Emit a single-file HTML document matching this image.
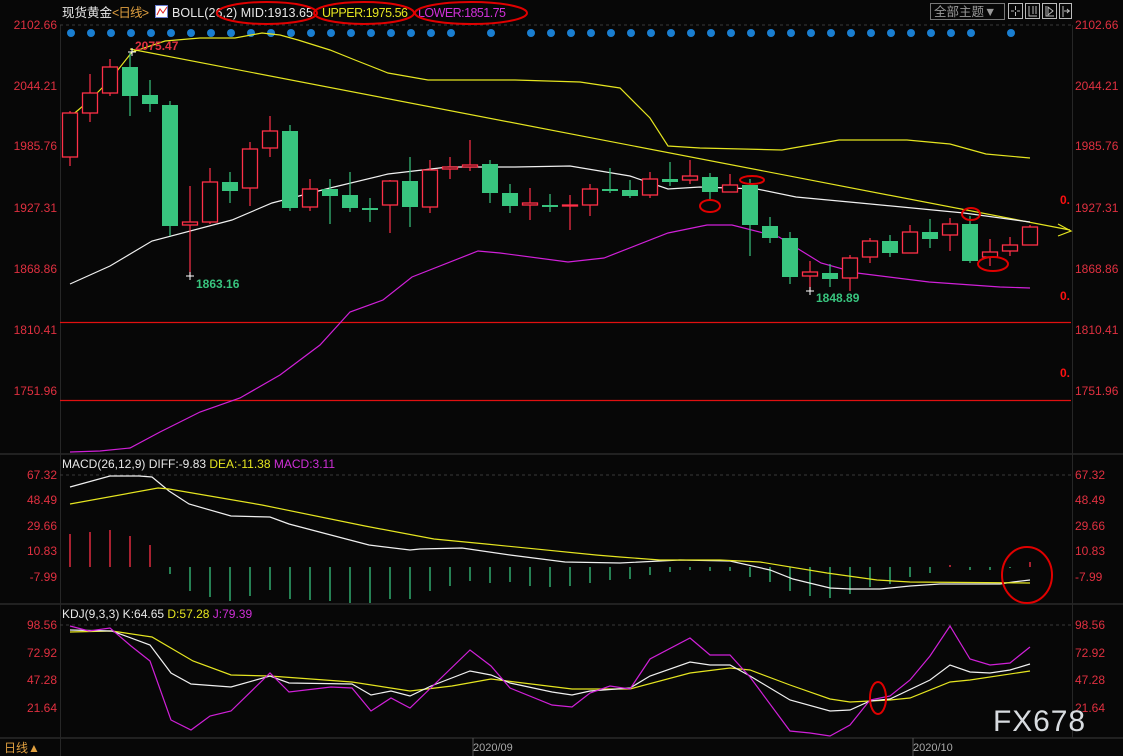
<!DOCTYPE html>
<html><head><meta charset="utf-8">
<style>
html,body{margin:0;padding:0;background:#070707;}
svg{display:block;font-family:"Liberation Sans","Noto Sans CJK SC",sans-serif;}
</style></head>
<body>
<svg width="1123" height="756" viewBox="0 0 1123 756" xmlns="http://www.w3.org/2000/svg">
<rect width="1123" height="756" fill="#070707"/>
<g stroke="#2a2a2a" stroke-width="1.5">
<line x1="0" y1="454" x2="1123" y2="454"/>
<line x1="0" y1="604" x2="1123" y2="604"/>
<line x1="0" y1="738" x2="1123" y2="738"/>
</g>
<g stroke="#262626" stroke-width="1">
<line x1="60.5" y1="25" x2="60.5" y2="756"/>
<line x1="1072.5" y1="25" x2="1072.5" y2="738"/>
</g>
<g stroke="#3a3a3a" stroke-dasharray="3,3">
<line x1="60" y1="25" x2="1072" y2="25"/>
<line x1="60" y1="475" x2="1072" y2="475"/>
<line x1="60" y1="625" x2="1072" y2="625"/>
</g>
<!-- top bar -->
<text x="62" y="17" font-size="12.5" fill="#e8e8e8" textLength="50">现货黄金</text>
<text x="112" y="17" font-size="12.5" fill="#e0a040" textLength="37">&lt;日线&gt;</text>
<rect x="155.5" y="5.5" width="12" height="12" fill="#fff" stroke="#6a7cd0"/>
<path d="M157 15 L160 9 L163 13 L167 7" stroke="#e02020" fill="none"/>
<text x="172" y="17" font-size="12.5" fill="#e8e8e8" textLength="141">BOLL(26,2) MID:1913.65</text>
<text x="322" y="17" font-size="12.5" fill="#e5e520" textLength="86">UPPER:1975.56</text>
<text x="418" y="17" font-size="12.5" fill="#d030d8" textLength="88">LOWER:1851.75</text>
<g fill="none" stroke="#e00000" stroke-width="2">
<ellipse cx="267" cy="13" rx="50" ry="11"/>
<ellipse cx="364" cy="13" rx="50" ry="11"/>
<ellipse cx="471" cy="13" rx="56" ry="11"/>
</g>
<rect x="930.5" y="3.5" width="74" height="16" fill="none" stroke="#777"/>
<text x="934" y="16" font-size="12.5" fill="#999">全部主题▼</text>
<g fill="none" stroke="#bbb">
<rect x="1008.5" y="3.5" width="14" height="15"/>
<rect x="1025.5" y="3.5" width="14" height="15"/>
<rect x="1042.5" y="3.5" width="14" height="15"/>
<rect x="1059.5" y="3.5" width="12" height="15"/>
<path d="M1015.5 6v4M1015.5 12v4M1011 11h3M1017 11h3M1029 6v10h8M1033 6v8M1036 6v8M1046 6v10h8M1048 7l5 4-5 4z M1063 6v11M1064 11h6M1067 9l2 2-2 2"/>
</g>
<g font-size="12" fill="#e03040" text-anchor="end">
<text x="57" y="29">2102.66</text>
<text x="57" y="90">2044.21</text>
<text x="57" y="150">1985.76</text>
<text x="57" y="212">1927.31</text>
<text x="57" y="273">1868.86</text>
<text x="57" y="334">1810.41</text>
<text x="57" y="395">1751.96</text>
<text x="57" y="479">67.32</text>
<text x="57" y="504">48.49</text>
<text x="57" y="530">29.66</text>
<text x="57" y="555">10.83</text>
<text x="57" y="581">-7.99</text>
<text x="57" y="629">98.56</text>
<text x="57" y="657">72.92</text>
<text x="57" y="684">47.28</text>
<text x="57" y="712">21.64</text>
</g>
<g font-size="12" fill="#e03040">
<text x="1075" y="29">2102.66</text>
<text x="1075" y="90">2044.21</text>
<text x="1075" y="150">1985.76</text>
<text x="1075" y="212">1927.31</text>
<text x="1075" y="273">1868.86</text>
<text x="1075" y="334">1810.41</text>
<text x="1075" y="395">1751.96</text>
<text x="1075" y="479">67.32</text>
<text x="1075" y="504">48.49</text>
<text x="1075" y="530">29.66</text>
<text x="1075" y="555">10.83</text>
<text x="1075" y="581">-7.99</text>
<text x="1075" y="629">98.56</text>
<text x="1075" y="657">72.92</text>
<text x="1075" y="684">47.28</text>
<text x="1075" y="712">21.64</text>
</g>
<g font-size="12" font-weight="bold" fill="#ff1010">
<text x="1060" y="204">0.</text>
<text x="1060" y="300">0.</text>
<text x="1060" y="377">0.</text>
</g>
<g fill="#1a7ed0">
<circle cx="71" cy="33" r="4"/><circle cx="91" cy="33" r="4"/><circle cx="111" cy="33" r="4"/><circle cx="131" cy="33" r="4"/><circle cx="151" cy="33" r="4"/><circle cx="171" cy="33" r="4"/><circle cx="191" cy="33" r="4"/><circle cx="211" cy="33" r="4"/><circle cx="231" cy="33" r="4"/><circle cx="251" cy="33" r="4"/><circle cx="271" cy="33" r="4"/><circle cx="291" cy="33" r="4"/><circle cx="311" cy="33" r="4"/><circle cx="331" cy="33" r="4"/><circle cx="351" cy="33" r="4"/><circle cx="371" cy="33" r="4"/><circle cx="391" cy="33" r="4"/><circle cx="411" cy="33" r="4"/><circle cx="431" cy="33" r="4"/><circle cx="451" cy="33" r="4"/><circle cx="491" cy="33" r="4"/><circle cx="531" cy="33" r="4"/><circle cx="551" cy="33" r="4"/><circle cx="571" cy="33" r="4"/><circle cx="591" cy="33" r="4"/><circle cx="611" cy="33" r="4"/><circle cx="631" cy="33" r="4"/><circle cx="651" cy="33" r="4"/><circle cx="671" cy="33" r="4"/><circle cx="691" cy="33" r="4"/><circle cx="711" cy="33" r="4"/><circle cx="731" cy="33" r="4"/><circle cx="751" cy="33" r="4"/><circle cx="771" cy="33" r="4"/><circle cx="791" cy="33" r="4"/><circle cx="811" cy="33" r="4"/><circle cx="831" cy="33" r="4"/><circle cx="851" cy="33" r="4"/><circle cx="871" cy="33" r="4"/><circle cx="891" cy="33" r="4"/><circle cx="911" cy="33" r="4"/><circle cx="931" cy="33" r="4"/><circle cx="951" cy="33" r="4"/><circle cx="971" cy="33" r="4"/><circle cx="1011" cy="33" r="4"/>
</g>
<g stroke="#e01010" stroke-width="1.3">
<line x1="60" y1="322.5" x2="1071" y2="322.5"/>
<line x1="60" y1="400.5" x2="1071" y2="400.5"/>
</g>
<g fill="none" stroke-width="1.2">
<polyline stroke="#e5e520" points="70,117 90,100 110,80 132,52 165,41 200,38 235,38 262,33 280,35 298,40 330,50 355,60 388,73 428,80 515,80 580,82 620,88 650,118 668,146 700,148 782,150 793,148 839,140 907,140 950,144 986,154 1030,158"/>
<polyline stroke="#e5e520" points="130,49 1070,230"/>
<path d="M1058 224 L1071 231 L1058 236" stroke="#e5e520"/>
<polyline stroke="#f0f0f0" points="70,284 110,266 152,241 232,220 272,203 330,188 388,174 448,167 515,167 570,166 630,176 668,189 700,187 757,189 796,197 860,203 964,213 1030,222"/>
<polyline stroke="#d020d8" points="70,452 100,451 130,448 160,432 200,412 240,398 280,375 320,345 350,312 383,300 412,277 478,251 500,253 568,262 604,258 668,233 707,225 732,225 779,237 821,263 857,273 929,282 1000,287 1030,288"/>
</g>
<path fill="none" stroke="#ff3048" stroke-width="1.2" d="M70 111V166 M90 74V122 M110 59V96 M190 186V276 M210 168V224 M250 142V206 M270 116V157 M310 179V211 M390 180V233 M430 160V213 M450 157V179 M470 140V171 M530 188V220 M570 195V230 M590 184V216 M650 172V198 M690 160V184 M730 174V192 M810 261V291 M850 255V291 M870 238V263 M910 225V253 M950 218V251 M990 239V266 M1010 237V256 M1030 225V245"/>
<path fill="none" stroke="#38c47e" stroke-width="1.2" d="M130 53V116 M150 80V112 M170 101V236 M230 172V203 M290 125V211 M330 179V224 M350 172V212 M370 198V222 M410 157V227 M490 160V203 M510 184V213 M550 194V212 M610 168V193 M630 180V198 M670 162V186 M710 173V200 M750 179V256 M770 217V243 M790 232V284 M830 264V287 M890 235V257 M930 219V248 M970 216V263"/>
<g fill="#38c47e">
<rect x="122" y="67" width="16" height="29"/><rect x="142" y="95" width="16" height="9"/><rect x="162" y="105" width="16" height="121"/><rect x="222" y="182" width="16" height="9"/><rect x="282" y="131" width="16" height="77"/><rect x="322" y="189" width="16" height="7"/><rect x="342" y="195" width="16" height="13"/><rect x="362" y="208" width="16" height="2"/><rect x="402" y="181" width="16" height="26"/><rect x="482" y="164" width="16" height="29"/><rect x="502" y="193" width="16" height="13"/><rect x="542" y="205" width="16" height="2"/><rect x="602" y="189" width="16" height="2"/><rect x="622" y="190" width="16" height="6"/><rect x="662" y="179" width="16" height="3"/><rect x="702" y="177" width="16" height="15"/><rect x="742" y="185" width="16" height="40"/><rect x="762" y="226" width="16" height="12"/><rect x="782" y="238" width="16" height="39"/><rect x="822" y="273" width="16" height="6"/><rect x="882" y="241" width="16" height="12"/><rect x="922" y="232" width="16" height="7"/><rect x="962" y="224" width="16" height="37"/>
</g>
<g fill="#070707" stroke="#ff3048" stroke-width="1.3">
<rect x="62.5" y="113" width="15" height="44"/><rect x="82.5" y="93" width="15" height="20"/><rect x="102.5" y="67" width="15" height="26"/><rect x="182.5" y="222" width="15" height="3"/><rect x="202.5" y="182" width="15" height="40"/><rect x="242.5" y="149" width="15" height="39"/><rect x="262.5" y="131" width="15" height="17"/><rect x="302.5" y="189" width="15" height="18"/><rect x="382.5" y="181" width="15" height="24"/><rect x="422.5" y="170" width="15" height="37"/><rect x="442.5" y="167" width="15" height="2"/><rect x="462.5" y="165" width="15" height="2"/><rect x="522.5" y="203" width="15" height="2"/><rect x="562.5" y="205" width="15" height="1"/><rect x="582.5" y="189" width="15" height="16"/><rect x="642.5" y="179" width="15" height="16"/><rect x="682.5" y="176" width="15" height="4"/><rect x="722.5" y="185" width="15" height="7"/><rect x="802.5" y="272" width="15" height="4"/><rect x="842.5" y="258" width="15" height="20"/><rect x="862.5" y="241" width="15" height="16"/><rect x="902.5" y="232" width="15" height="21"/><rect x="942.5" y="224" width="15" height="11"/><rect x="982.5" y="252" width="15" height="5"/><rect x="1002.5" y="245" width="15" height="6"/><rect x="1022.5" y="227" width="15" height="18"/>
</g>
<text x="135" y="50" font-size="12" font-weight="bold" fill="#e03040">2075.47</text>
<path d="M128 52h8M132 48v8" stroke="#fff"/>
<path d="M186 276h8M190 272v8" stroke="#fff"/>
<text x="196" y="288" font-size="12" font-weight="bold" fill="#38c47e">1863.16</text>
<path d="M806 291h8M810 287v8" stroke="#fff"/>
<text x="816" y="302" font-size="12" font-weight="bold" fill="#38c47e">1848.89</text>
<g fill="none" stroke="#e00000" stroke-width="2">
<ellipse cx="710" cy="206" rx="10" ry="6"/>
<ellipse cx="752" cy="180" rx="12" ry="4"/>
<ellipse cx="971" cy="214" rx="9" ry="6"/>
<ellipse cx="993" cy="264" rx="15" ry="7"/>
</g>
<text x="62" y="468" font-size="12" fill="#e8e8e8">MACD(26,12,9) DIFF:-9.83 <tspan fill="#e5e520">DEA:-11.38</tspan> <tspan fill="#d030d8">MACD:3.11</tspan></text>
<path fill="none" stroke="#ff3048" stroke-width="1.3" d="M70 567V534 M90 567V532 M110 567V530 M130 567V536 M150 567V545 M950 567V565 M1030 567V562"/>
<path fill="none" stroke="#38c47e" stroke-width="1.3" d="M170 567V574 M190 567V591 M210 567V597 M230 567V601 M250 567V596 M270 567V590 M290 567V599 M310 567V600 M330 567V601 M350 567V603 M370 567V603 M390 567V599 M410 567V599 M430 567V591 M450 567V586 M470 567V581 M490 567V583 M510 567V582 M530 567V586 M550 567V587 M570 567V586 M590 567V583 M610 567V580 M630 567V579 M650 567V575 M670 567V572 M690 567V570 M710 567V571 M730 567V571 M750 567V577 M770 567V582 M790 567V591 M810 567V596 M830 567V598 M850 567V594 M870 567V587 M890 567V584 M910 567V577 M930 567V573 M970 567V570 M990 567V570 M1010 567V568"/>
<g fill="none" stroke-width="1.2">
<polyline stroke="#f0f0f0" points="70,487 110,476 139,476 152,477 169,491 189,504 231,516 270,517 289,524 327,534 369,545 410,550 420,549 462,548 510,555 565,562 620,563 680,560 730,561 770,570 793,579 830,588 850,589 880,589 910,586 940,584 1000,584 1013,582 1030,580"/>
<polyline stroke="#e5e520" points="70,504 158,488 169,489 262,505 365,526 434,539 486,544 596,555 620,557 660,560 720,560 760,562 827,573 877,580 910,582 1030,583"/>
</g>
<ellipse cx="1027" cy="575" rx="25" ry="28" fill="none" stroke="#e00000" stroke-width="2"/>
<text x="62" y="618" font-size="12" fill="#e8e8e8">KDJ(9,3,3) K:64.65 <tspan fill="#e5e520">D:57.28</tspan> <tspan fill="#d030d8">J:79.39</tspan></text>
<g fill="none" stroke-width="1.2">
<polyline stroke="#e5e520" points="70,632 112,631 152,637 193,661 231,675 270,676 352,682 410,691 452,686 491,679 572,689 596,689 630,689 690,673 730,668 750,670 790,685 830,699 850,702 890,700 910,698 950,682 970,680 1030,671"/>
<polyline stroke="#f0f0f0" points="70,630 112,631 150,645 171,673 191,684 231,687 270,676 289,683 352,684 371,695 391,691 410,696 431,686 470,671 491,675 510,683 552,692 572,695 590,691 630,688 650,676 690,662 710,665 730,665 750,676 790,700 830,711 850,710 870,701 890,699 930,680 950,665 970,672 990,673 1010,670 1030,664"/>
<polyline stroke="#d020d8" points="70,626 89,631 110,628 131,646 150,661 171,720 191,730 210,716 231,711 270,673 289,692 331,687 352,688 371,711 391,698 410,708 470,650 491,666 510,688 552,705 572,707 590,693 610,686 630,689 650,659 690,638 710,655 730,655 750,677 790,731 810,733 830,736 850,725 870,700 890,696 910,680 930,656 950,626 970,659 990,665 1010,663 1030,647"/>
</g>
<ellipse cx="878" cy="698" rx="8" ry="16" fill="none" stroke="#e00000" stroke-width="2"/>
<text x="993" y="731" font-size="30" fill="#d8dce0" textLength="92">FX678</text>
<text x="4" y="752" font-size="12" fill="#e0a040">日线▲</text>
<g stroke="#555"><line x1="473" y1="738" x2="473" y2="756"/><line x1="913" y1="738" x2="913" y2="756"/></g>
<text x="473" y="751" font-size="11" fill="#aaa">2020/09</text>
<text x="913" y="751" font-size="11" fill="#aaa">2020/10</text>
</svg>
</body></html>
